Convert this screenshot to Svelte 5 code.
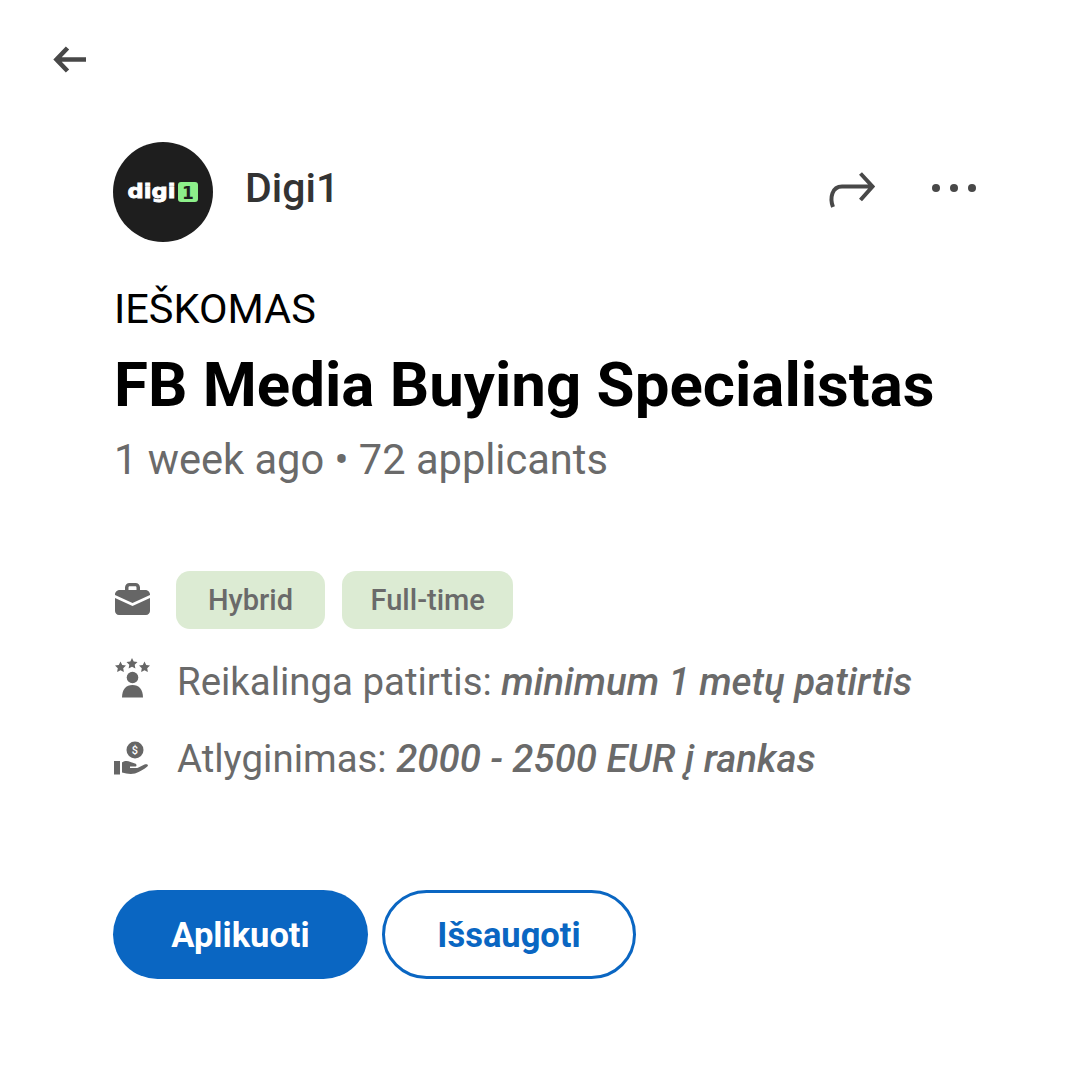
<script>
  const tags = [{ label: 'Hybrid', pad: 32 }, { label: 'Full-time', pad: 28.5 }];
</script>

<main class="page">
  <button class="back" aria-label="Back">
    <svg width="36" height="30" viewBox="0 0 36 30"><path d="M34 14.500H5M15.500 3 4.500 14.500 15.500 26" fill="none" stroke="#484848" stroke-width="4.600"/></svg>
  </button>

  <section class="content">
    <header class="company">
      <div class="logo">
        <svg width="72" height="28" viewBox="0 0 72 28">
          <text x="0.500" y="20" font-family="DejaVu Sans" font-weight="700" font-size="19" textLength="48" lengthAdjust="spacingAndGlyphs" fill="#fff" stroke="#fff" stroke-width="0.800">digi</text>
          <rect x="51" y="4" width="20" height="20" rx="3" fill="#8df08a"/>
          <text x="61" y="20.500" text-anchor="middle" font-family="DejaVu Sans" font-weight="700" font-size="17" fill="#1e1e1e">1</text>
        </svg>
      </div>
      <span class="name">Digi1</span>
      <div class="actions">
        <svg width="50" height="38" viewBox="0 0 50 38"><path d="M7 36C3.500 27 6 15.500 16 15.500H46M34.500 2.500 46.500 15.500 34.500 29" fill="none" stroke="#484848" stroke-width="4"/></svg>
        <svg class="dots" width="46" height="10" viewBox="0 0 46 10"><circle cx="5" cy="5" r="4" fill="#484848"/><circle cx="23" cy="5" r="4" fill="#484848"/><circle cx="41" cy="5" r="4" fill="#484848"/></svg>
      </div>
    </header>

    <p class="eyebrow">IEŠKOMAS</p>
    <h1>FB Media Buying Specialistas</h1>
    <p class="meta">1 week ago • 72 applicants</p>

    <div class="details">
      <div class="row tagrow">
        <svg class="ic case" width="35" height="32" viewBox="0 0 35 32"><path fill="#666" d="M10 7V4.500C10 2 12 0 14.500 0h6C23 0 25 2 25 4.500V7h5c2.800 0 5 2 5 4.500v.5L17.500 20 0 12v-.5C0 9 2.200 7 5 7zm3.500 0h8V4.500C21.500 3.700 21 3.200 20.200 3.200h-5.400c-.8 0-1.300.5-1.300 1.300z"/><path fill="#666" d="M0 15l17.500 8L35 15v13c0 2.200-1.800 4-4 4H4c-2.200 0-4-1.800-4-4z"/></svg>
        {#each tags as tag}
          <span class="tag" style="padding-inline: {tag.pad}px">{tag.label}</span>
        {/each}
      </div>
      <div class="row">
        <svg class="ic stars" width="35" height="40" viewBox="0 0 35 40"><path fill="#666" d="M5.500 3.500l1.700 3.500 3.800.5-2.800 2.700.7 3.800-3.400-1.800-3.400 1.800.7-3.800L0 7.500l3.800-.5zM17 0l1.700 3.500 3.800.5-2.800 2.700.7 3.800L17 8.700l-3.400 1.800.7-3.800L11.500 4l3.800-.5zM29.500 3.500l1.700 3.500 3.800.5-2.800 2.700.7 3.800-3.400-1.800-3.400 1.800.7-3.800L24 7.500l3.800-.5z"/><circle fill="#666" cx="17.500" cy="19.500" r="5.800"/><path fill="#666" d="M7 39.500c0-8 4-12.500 10.500-12.500S28 31.500 28 39.500z"/></svg>
        <p class="line">Reikalinga patirtis: <em>minimum 1 metų patirtis</em></p>
      </div>
      <div class="row">
        <svg class="ic hand" width="35" height="34" viewBox="0 0 35 34"><circle fill="#666" cx="21" cy="9" r="8.500"/><text x="21" y="13" text-anchor="middle" font-family="Roboto" font-size="11" font-weight="500" fill="#fff">$</text><path fill="#666" d="M0 20h6v13.500H0zM8 21.500c3-1.800 5.500-1.800 8.500-.5l4.500 1.500c2 .6 2 3 0 3h-5v1.500h6c2 0 3-.6 4.500-1.500l4-2c2.500-1 4.500.5 2.800 2-3 2.800-7.300 5.200-12.300 7-5 1-9 0-13-1z"/></svg>
        <p class="line">Atlyginimas: <em>2000 - 2500 EUR į rankas</em></p>
      </div>
    </div>

    <div class="buttons">
      <button class="btn primary">Aplikuoti</button>
      <button class="btn secondary">Išsaugoti</button>
    </div>
  </section>
</main>

<style>
  :global(body) { margin: 0; background: #fff; }
  .page {
    width: 1080px;
    height: 1080px;
    box-sizing: border-box;
    font-family: Roboto, sans-serif;
    padding: 45px 0 0 52px;
  }
  button { font-family: inherit; }
  .back { display: block; border: 0; padding: 0; background: none; height: 30px; }
  .back svg { display: block; }
  .content { margin: 67px 0 0 61px; width: 864px; }
  .company { display: flex; align-items: center; height: 100px; }
  .logo {
    width: 100px; height: 100px; border-radius: 50%;
    background: #1e1e1e;
    display: flex; align-items: center; justify-content: center;
  }
  .name { margin-left: 32px; font-size: 41px; font-weight: 500; color: #333; position: relative; top: -4px; }
  .actions { margin-left: auto; display: flex; align-items: center; gap: 55px; position: relative; top: -2px; }
  .dots { position: relative; top: -2px; }
  .eyebrow { margin: 42px 0 0 1px; font-size: 41.500px; line-height: 50px; color: #000; }
  h1 { margin: 16px 0 0 1px; font-size: 61.800px; line-height: 70px; font-weight: 700; color: #000; }
  .meta { margin: 17px 0 0 1px; font-size: 41.600px; line-height: 46px; color: #6a6a6a; }
  .details { margin: 88px 0 0 1px; display: flex; flex-direction: column; }
  .row { display: flex; align-items: center; }
  .tagrow { height: 58px; }
  .row + .row { margin-top: 29px; }
  .ic { flex: none; width: 35px; margin-left: 1px; margin-right: 26px; }
  .case { margin-bottom: 2px; }
  .stars { margin-bottom: 8px; }
  .hand { margin-left: 0; margin-right: 27px; margin-bottom: 2px; }
  .tag {
    height: 58px; box-sizing: border-box; margin-right: 17px;
    display: flex; align-items: center; border-radius: 14px;
    background: #dcebd3; color: #6a6a6a; font-size: 29px; font-weight: 500;
  }
  .line { margin: 0 0 0 1px; font-size: 38.400px; line-height: 48px; color: #6a6a6a; }
  .line em { font-weight: 500; font-style: italic; }
  .buttons { display: flex; gap: 14px; margin-top: 107px; }
  .btn {
    width: 255px; height: 89px; box-sizing: border-box; border-radius: 45px;
    font-size: 34.500px; font-weight: 700; padding: 0;
  }
  .primary { background: #0a66c2; color: #fff; border: 0; }
  .secondary { background: #fff; color: #0a66c2; border: 3.500px solid #0a66c2; width: 254px; }
</style>
